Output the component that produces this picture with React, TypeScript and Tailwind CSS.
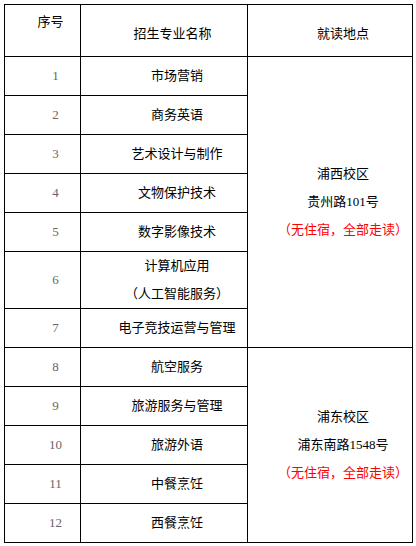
const MAJORS: { no: number; name: string[] }[] = [
  { no: 1, name: ['市场营销'] },
  { no: 2, name: ['商务英语'] },
  { no: 3, name: ['艺术设计与制作'] },
  { no: 4, name: ['文物保护技术'] },
  { no: 5, name: ['数字影像技术'] },
  { no: 6, name: ['计算机应用', '（人工智能服务）'] },
  { no: 7, name: ['电子竞技运营与管理'] },
  { no: 8, name: ['航空服务'] },
  { no: 9, name: ['旅游服务与管理'] },
  { no: 10, name: ['旅游外语'] },
  { no: 11, name: ['中餐烹饪'] },
  { no: 12, name: ['西餐烹饪'] },
]

// grid rows: header, data rows 1-7 (campus west), data rows 8-12 (campus east)
const ROW_START = [
  'row-start-2',
  'row-start-3',
  'row-start-4',
  'row-start-5',
  'row-start-6',
  'row-start-7',
  'row-start-8',
  'row-start-9',
  'row-start-10',
  'row-start-11',
  'row-start-12',
  'row-start-13',
]

function Campus({ name, address, className }: { name: string; address: string; className: string }) {
  return (
    <div className={`flex flex-col items-center justify-center bg-white pl-[26px] leading-[28px] ${className}`}>
      <span>{name}</span>
      <span>{address}</span>
      <span className="text-[#ff0000]">（无住宿，全部走读）</span>
    </div>
  )
}

export default function App() {
  return (
    <div className="min-h-[546px] bg-white pl-[4px] pt-[4px] font-['Liberation_Serif','Noto_Sans_CJK_SC',serif] text-[13px] text-black">
      <div className="grid w-[409px] grid-cols-[75px_166px_164px] grid-rows-[51px_repeat(5,38px)_56px_repeat(6,38px)] gap-px bg-black p-px">
        <div className="col-start-1 row-start-1 bg-white pl-[16px] pt-[3px] text-center leading-[28px]">序号</div>
        <div className="col-start-2 row-start-1 flex items-center justify-center bg-white pl-[17px] pt-[6px] leading-[28px]">
          招生专业名称
        </div>
        <div className="col-start-3 row-start-1 flex items-center justify-center bg-white pl-[26px] pt-[6px] leading-[28px]">
          就读地点
        </div>

        {MAJORS.map((m, i) => (
          <div key={m.no} className="contents">
            <div className={`col-start-1 ${ROW_START[i]} flex items-center justify-center bg-white pl-[26px] text-[#666]`}>
              {m.no}
            </div>
            <div className={`col-start-2 ${ROW_START[i]} flex flex-col items-center justify-center bg-white pl-[26px] leading-[28px]`}>
              {m.name.map((line) => (
                <span key={line}>{line}</span>
              ))}
            </div>
          </div>
        ))}

        <Campus name="浦西校区" address="贵州路101号" className="col-start-3 row-start-2 row-end-9" />
        <Campus name="浦东校区" address="浦东南路1548号" className="col-start-3 row-start-9 row-end-14" />
      </div>
    </div>
  )
}
